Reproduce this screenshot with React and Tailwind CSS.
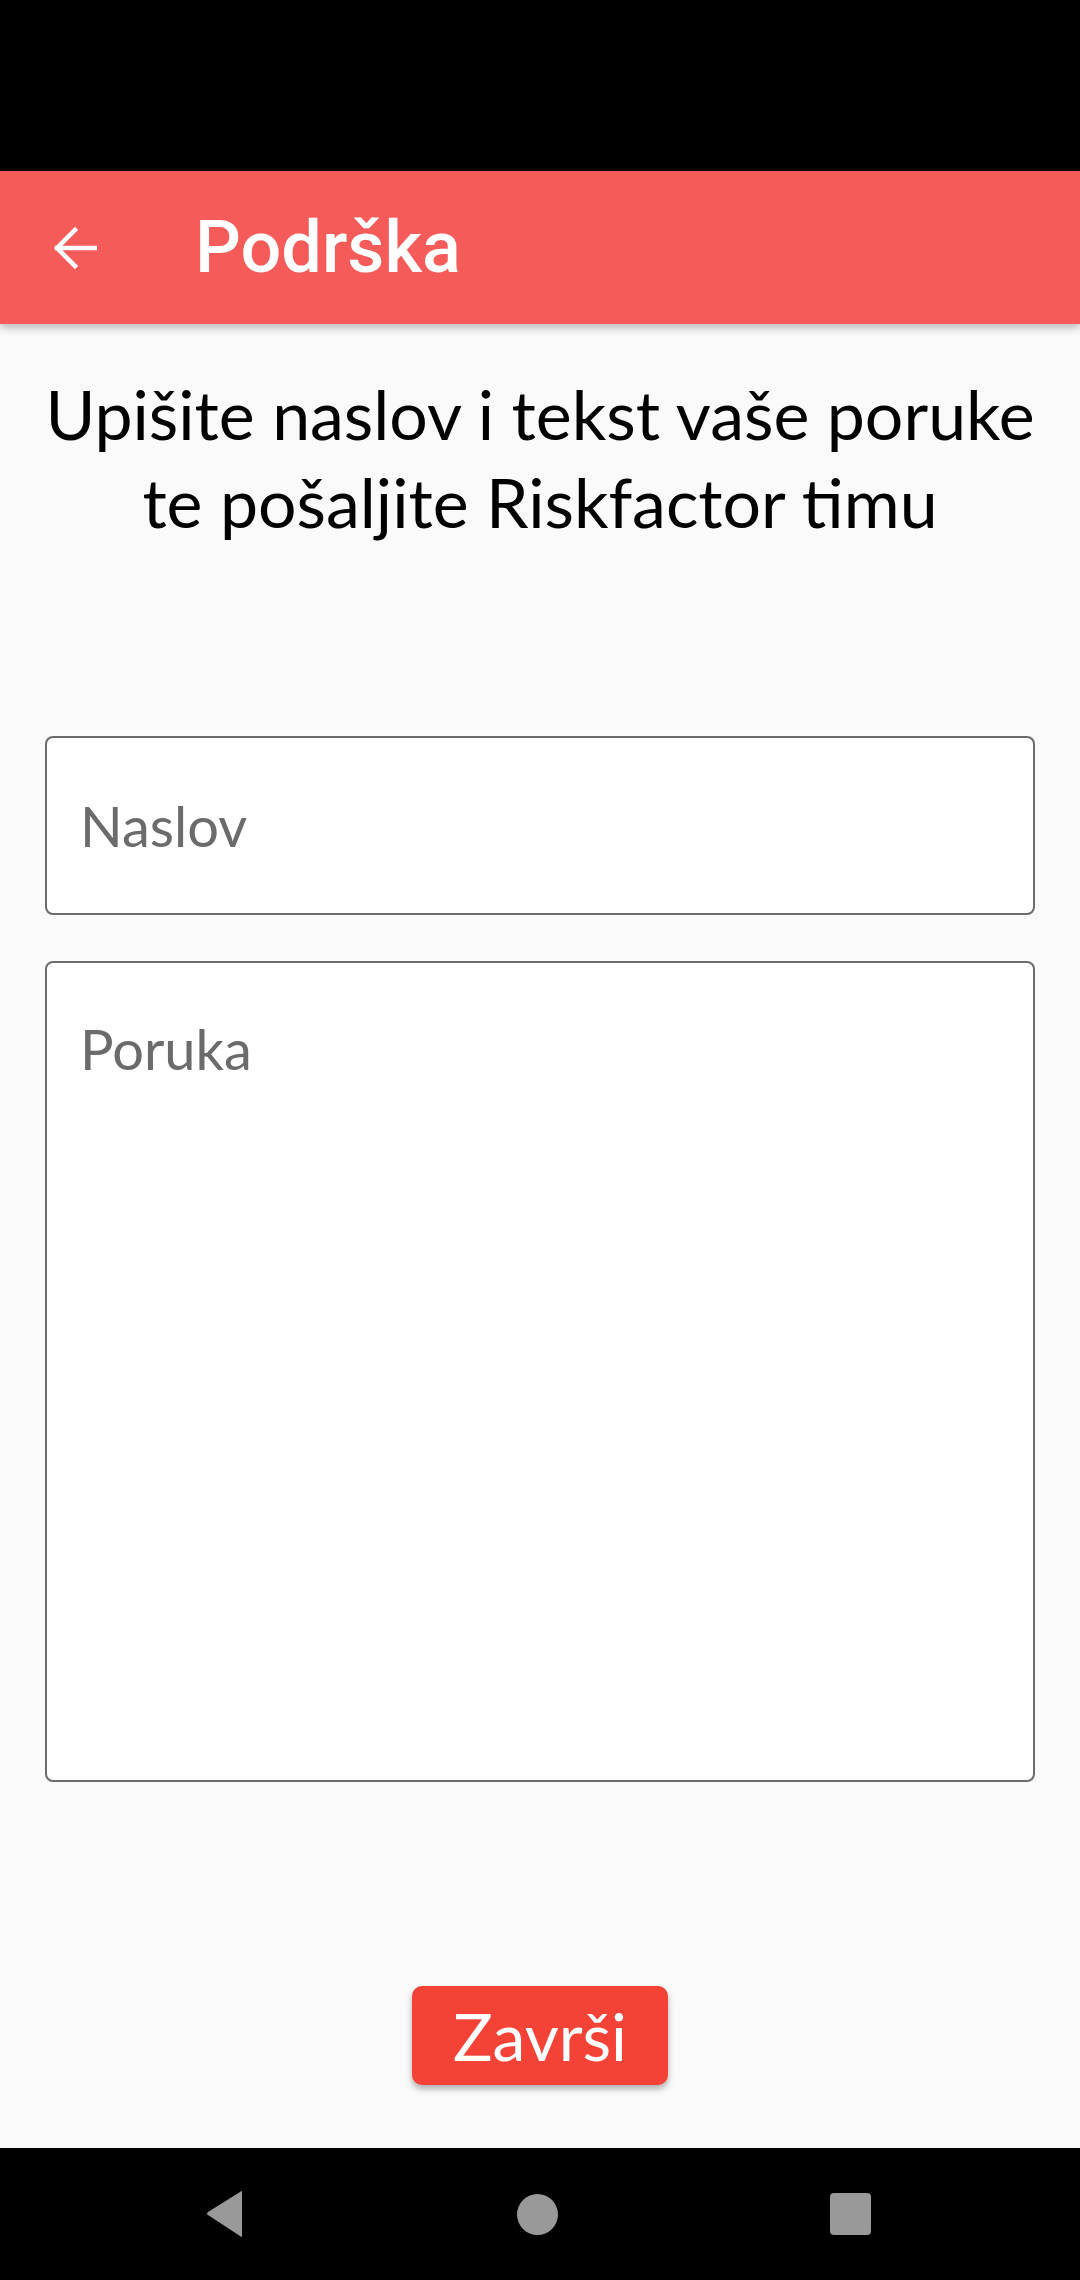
import React from 'react';

const BackArrow = () => (
  <svg width="44" height="44" viewBox="0 0 44 44" fill="none">
    <path d="M42 22H4M22 4L4 22l18 18" stroke="white" strokeWidth="4.5" strokeLinecap="square" />
  </svg>
);

const App = () => {
  return (
    <div className="w-[1080px] h-[2280px] flex flex-col bg-[#fafafa]" style={{ fontFamily: 'Lato, "Noto Sans", sans-serif' }}>
      {/* status bar */}
      <div className="h-[171px] bg-black shrink-0" />

      {/* toolbar */}
      <header className="h-[153px] shrink-0 bg-[#f45b59] flex items-center shadow-[0_4px_8px_rgba(0,0,0,0.25)] relative z-10">
        <div className="w-[195px] pl-[53px] flex items-center">
          <BackArrow />
        </div>
        <h1 className="text-white text-[72px] font-medium leading-none" style={{ fontFamily: 'Roboto, sans-serif' }}>
          Podrška
        </h1>
      </header>

      {/* content */}
      <main className="flex-1 flex flex-col items-center px-[45px]">
        <p className="mt-[46px] text-center text-black text-[68px] leading-[88px]">
          Upišite naslov i tekst vaše poruke
          <br />
          te pošaljite Riskfactor timu
        </p>

        <div className="mt-[190px] w-full flex flex-col gap-[46px]">
          <div className="h-[179px] w-full bg-white border-2 border-[#6b6b6b] rounded-[8px] pl-[33px] flex items-center">
            <span className="text-[56px] text-[#6b6b6b]">Naslov</span>
          </div>
          <div className="h-[821px] w-full bg-white border-2 border-[#6b6b6b] rounded-[8px] pl-[33px] pt-[58px]">
            <span className="text-[56px] text-[#6b6b6b] leading-none">Poruka</span>
          </div>
        </div>

        <button className="mt-[204px] w-[256px] h-[99px] bg-[#f44336] rounded-[10px] text-white text-[66px] leading-none shadow-[0_4px_6px_rgba(0,0,0,0.3)] flex items-center justify-center">
          Završi
        </button>
      </main>

      {/* navigation bar */}
      <nav className="h-[132px] shrink-0 bg-black flex items-center">
        <div className="w-full flex justify-between items-center pl-[205px] pr-[209px]">
          <svg width="40" height="48" viewBox="0 0 40 48">
            <path d="M37 2 L37 46 Q37 48 35 46 L3 25 Q1 24 3 22 L35 2 Q37 0 37 2Z" fill="#999999" />
          </svg>
          <div className="w-[41px] h-[41px] rounded-full bg-[#999999]" />
          <div className="w-[41px] h-[42px] rounded-[4px] bg-[#999999]" />
        </div>
      </nav>
    </div>
  );
};

export default App;
